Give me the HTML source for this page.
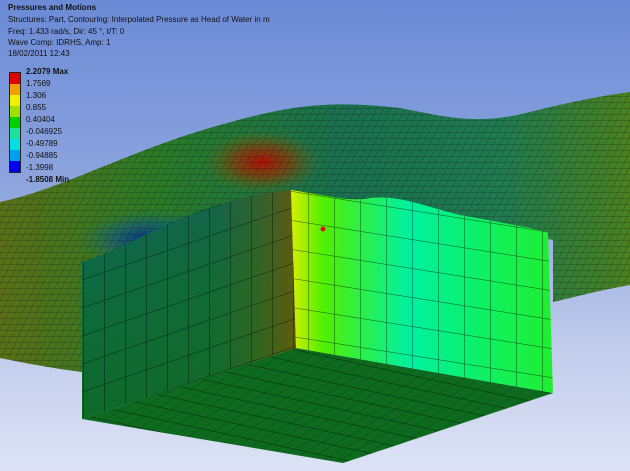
<!DOCTYPE html>
<html><head><style>
html,body{margin:0;padding:0;width:630px;height:471px;overflow:hidden}
body{background:linear-gradient(#6b8ad6 0%,#8ea5de 40%,#c3cdec 75%,#dde3f5 100%);font-family:"Liberation Sans",sans-serif;position:relative}
.t{position:absolute;left:8px;font-size:8px;color:#111;line-height:10.5px}
.lg{position:absolute;left:9px;top:72px;width:10px;border:1px solid #222}
.lg div{height:11px}
.lb{position:absolute;left:26px;font-size:8px;color:#111}
svg{position:absolute;left:0;top:0}
</style></head><body>
<svg width="630" height="471">
<defs>
<radialGradient id="red" cx="262" cy="162" r="45" gradientTransform="translate(262 162) scale(1.3 .7) translate(-262 -162)" gradientUnits="userSpaceOnUse"><stop offset="0" stop-color="#b01008"/><stop offset=".5" stop-color="#8a3a08" stop-opacity=".7"/><stop offset="1" stop-color="#6a6a10" stop-opacity="0"/></radialGradient>
<radialGradient id="blue" cx="150" cy="240" r="50" gradientTransform="translate(150 240) scale(1.4 .6) translate(-150 -240)" gradientUnits="userSpaceOnUse"><stop offset="0" stop-color="#0a2a90"/><stop offset=".6" stop-color="#15607a" stop-opacity=".6"/><stop offset="1" stop-color="#1a7a60" stop-opacity="0"/></radialGradient>
<linearGradient id="surf" x1="0" y1="0" x2="1" y2="0"><stop offset="0" stop-color="#5a7018"/><stop offset=".25" stop-color="#2a7a28"/><stop offset=".55" stop-color="#1a7050"/><stop offset=".8" stop-color="#207a50"/><stop offset="1" stop-color="#4a8020"/></linearGradient>
<linearGradient id="rw" x1="0" y1="0" x2="1" y2="0"><stop offset="0" stop-color="#d8f000"/><stop offset=".12" stop-color="#50f000"/><stop offset=".45" stop-color="#00f0a0"/><stop offset=".75" stop-color="#10f060"/><stop offset="1" stop-color="#20ee30"/></linearGradient>
<linearGradient id="lw" x1="0" y1="0" x2="0" y2="1"><stop offset="0" stop-color="#106060"/><stop offset=".4" stop-color="#0e6a40"/><stop offset="1" stop-color="#0e6a28"/></linearGradient>
<linearGradient id="lw2" x1="0" y1="0" x2="1" y2="0"><stop offset="0" stop-color="#0e6a30" stop-opacity="0"/><stop offset=".6" stop-color="#1a6a20" stop-opacity=".3"/><stop offset="1" stop-color="#6a5a08" stop-opacity=".9"/></linearGradient>
<pattern id="g" width="7" height="6" patternUnits="userSpaceOnUse" patternTransform="skewX(-25)"><path d="M0 0H7M0 0V6" stroke="#000" stroke-opacity=".55" stroke-width=".6" fill="none"/></pattern>
<pattern id="g2" width="26" height="29" patternUnits="userSpaceOnUse" patternTransform="skewY(9) translate(-4,0)"><path d="M0 0H26M0 0V29" stroke="#000" stroke-opacity=".65" stroke-width="1" fill="none"/></pattern>
<pattern id="g3" width="21" height="28" patternUnits="userSpaceOnUse" patternTransform="skewY(-19) translate(-1,0)"><path d="M0 0H21M0 0V28" stroke="#000" stroke-opacity=".65" stroke-width="1" fill="none"/></pattern>
<pattern id="g4" width="16" height="9" patternUnits="userSpaceOnUse" patternTransform="skewX(-60) skewY(9)"><path d="M0 0H16M0 0V9" stroke="#000" stroke-opacity=".6" stroke-width=".8" fill="none"/></pattern>
</defs>
<polygon points="80,182 300,128 305,150 80,205" fill="#c8cdd8" opacity=".7"/>
<g>
<path id="sp" d="M0,202 C60,190 130,150 220,125 C290,105 330,100 400,108 C450,118 480,125 530,112 C570,102 600,96 630,92 L630,285 C600,290 575,297 553,302 L553,240 L291,190 L82,265 L82,372 C50,368 20,362 0,358 Z" fill="url(#surf)"/>
<path d="M0,202 C60,190 130,150 220,125 C290,105 330,100 400,108 C450,118 480,125 530,112 C570,102 600,96 630,92 L630,285 C600,290 575,297 553,302 L553,240 L291,190 L82,265 L82,372 C50,368 20,362 0,358 Z" fill="url(#red)"/>
<path d="M0,202 C60,190 130,150 220,125 C290,105 330,100 400,108 C450,118 480,125 530,112 C570,102 600,96 630,92 L630,285 C600,290 575,297 553,302 L553,240 L291,190 L82,265 L82,372 C50,368 20,362 0,358 Z" fill="url(#blue)"/>
<path d="M0,202 C60,190 130,150 220,125 C290,105 330,100 400,108 C450,118 480,125 530,112 C570,102 600,96 630,92 L630,285 C600,290 575,297 553,302 L553,240 L291,190 L82,265 L82,372 C50,368 20,362 0,358 Z" fill="url(#g)"/>
</g>
<polygon points="82,419 296,348 553,393 343,463" fill="#0d6a1e"/>
<polygon points="82,419 296,348 553,393 343,463" fill="url(#g4)"/>
<path d="M82,262 C120,250 150,230 190,215 C230,200 260,192 291,190 L296,348 L82,419 Z" fill="url(#lw)"/>
<path d="M82,262 C120,250 150,230 190,215 C230,200 260,192 291,190 L296,348 L82,419 Z" fill="url(#lw2)"/>
<path d="M82,262 C120,250 150,230 190,215 C230,200 260,192 291,190 L296,348 L82,419 Z" fill="url(#g3)"/>
<path d="M291,190 C330,196 350,202 370,198 C400,195 420,205 460,215 C500,222 530,228 548,232 L553,393 L296,348 Z" fill="url(#rw)"/>
<path d="M291,190 C330,196 350,202 370,198 C400,195 420,205 460,215 C500,222 530,228 548,232 L553,393 L296,348 Z" fill="url(#g2)"/>
<circle cx="323" cy="229" r="2.5" fill="#e01010"/>
</svg>
<div class="t" style="top:3px;font-weight:bold">Pressures and Motions</div>
<div class="t" style="top:15px">Structures: Part, Contouring: Interpolated Pressure as Head of Water in m</div>
<div class="t" style="top:27px">Freq: 1.433 rad/s, Dir: 45 °, t/T: 0</div>
<div class="t" style="top:38px">Wave Comp: IDRHS, Amp: 1</div>
<div class="t" style="top:49px">18/02/2011 12:43</div>
<div class="lg">
<div style="background:#e00000"></div><div style="background:#f0a000"></div><div style="background:#f0f000"></div><div style="background:#a0e000"></div><div style="background:#00d000"></div><div style="background:#20e0a0"></div><div style="background:#00e0e0"></div><div style="background:#00a0f0"></div><div style="background:#0000f0"></div>
</div>
<div class="lb" style="top:67px;font-weight:bold">2.2079 Max</div>
<div class="lb" style="top:79px">1.7569</div>
<div class="lb" style="top:91px">1.306</div>
<div class="lb" style="top:103px">0.855</div>
<div class="lb" style="top:115px">0.40404</div>
<div class="lb" style="top:127px">-0.046925</div>
<div class="lb" style="top:139px">-0.49789</div>
<div class="lb" style="top:151px">-0.94885</div>
<div class="lb" style="top:163px">-1.3998</div>
<div class="lb" style="top:175px;font-weight:bold">-1.8508 Min</div>
</body></html>
